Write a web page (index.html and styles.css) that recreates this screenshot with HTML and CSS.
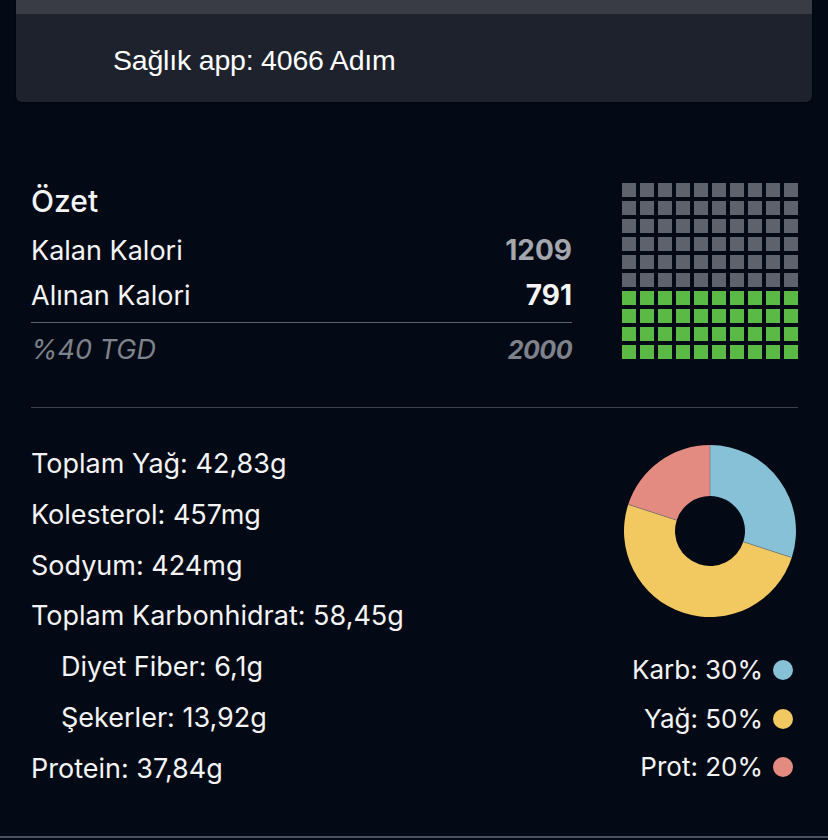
FILE: index.html
```html
<!doctype html>
<html>
<head>
<meta charset="utf-8">
<title>Özet</title>
<link rel="stylesheet" href="styles.css">
</head>
<body>
	<div class="card">
		<div class="card-top"></div>
		<div class="card-body">Sağlık app: 4066 Adım</div>
	</div>

	<div class="summary">
		<div class="summary-left">
			<h2 class="title">Özet</h2>
			<div class="row">
				<span>Kalan Kalori</span>
				<b class="gray">1209</b>
			</div>
			<div class="row row-line">
				<span>Alınan Kalori</span>
				<b>791</b>
			</div>
			<div class="row row-goal">
				<span>%40 TGD</span>
				<b>2000</b>
			</div>
		</div>
		<div class="waffle" id="waffle"></div>
	</div>

	<div class="divider"></div>

	<div class="nutrients">
		<ul class="list">
			<li>Toplam Yağ: 42,83g</li>
			<li>Kolesterol: 457mg</li>
			<li>Sodyum: 424mg</li>
			<li>Toplam Karbonhidrat: 58,45g</li>
			<li class="sub">Diyet Fiber: 6,1g</li>
			<li class="sub">Şekerler: 13,92g</li>
			<li>Protein: 37,84g</li>
		</ul>
		<div class="chart">
			<svg class="donut" width="174" height="174" viewBox="0 0 174 174">
				<path fill="#87c1d7" d="M87 1 A86 86 0 0 1 168.79 113.58 L120.29 97.82 A35 35 0 0 0 87 52 Z"/>
				<path fill="#f2c961" d="M168.79 113.58 A86 86 0 0 1 5.21 60.42 L53.71 76.18 A35 35 0 0 0 120.29 97.82 Z"/>
				<path fill="#e48b81" d="M5.21 60.42 A86 86 0 0 1 87 1 L87 52 A35 35 0 0 0 53.71 76.18 Z"/>
				<g stroke="#6b6f78" stroke-width="0.6">
					<line x1="87" y1="1" x2="87" y2="52"/>
					<line x1="168.79" y1="113.58" x2="120.29" y2="97.82"/>
					<line x1="5.21" y1="60.42" x2="53.71" y2="76.18"/>
				</g>
			</svg>
			<ul class="legend">
				<li>Karb: 30%<i class="dot blue"></i></li>
				<li>Yağ: 50%<i class="dot yellow"></i></li>
				<li>Prot: 20%<i class="dot pink"></i></li>
			</ul>
		</div>
	</div>

	<div class="bottom"></div>

	<script>
		var oWaffle = document.getElementById('waffle');
		var html = '';
		for(var i=0; i<100; i++){
			html += '<i class="'+(i>=60 ? 'on' : '')+'"></i>';
		}
		oWaffle.innerHTML = html;
	</script>
</body>
</html>
```

FILE: styles.css
```css
*{
	margin: 0;
	padding: 0;
	list-style: none;
	box-sizing: border-box;
}
body{
	width: 828px;
	height: 840px;
	overflow: hidden;
	background: #030a15;
	color: #f4f4f6;
	font-family: Inter, "Liberation Sans", sans-serif;
}
.card{
	margin: 0 16px;
	background: #1e222d;
	border-radius: 0 0 6px 6px;
	height: 102px;
	box-shadow: 0 1px 2px rgba(0,0,0,.6);
}
.card-top{
	height: 14px;
	background: #393c45;
}
.card-body{
	padding: 31px 0 0 97px;
	font-family: "Liberation Sans", Arial, sans-serif;
	font-size: 28.5px;
	line-height: 30px;
	color: #fff;
	letter-spacing: -0.2px;
}
.summary{
	display: flex;
	justify-content: space-between;
	align-items: flex-start;
	margin-top: 81px;
	padding: 0 30px 0 31px;
}
.summary-left{
	width: 541px;
}
.title{
	margin-top: 3px;
	font-size: 30px;
	font-weight: 500;
	line-height: 30px;
}
.row{
	display: flex;
	justify-content: space-between;
	font-size: 27px;
	line-height: 45px;
}
.title + .row{
	margin-top: 12px;
}
.row b{
	font-size: 28px;
	font-weight: 700;
}
.row .gray{
	color: #a5a7ae;
}
.row-line{
	padding-bottom: 4px;
	border-bottom: 1px solid #5d636e;
}
.row-goal{
	padding-top: 5px;
	line-height: 44px;
	font-style: italic;
	color: #7e828b;
}
.row-goal b{
	font-size: 25px;
	letter-spacing: -0.5px;
}
.waffle{
	display: grid;
	grid-template-columns: repeat(10, 14px);
	grid-auto-rows: 14px;
	gap: 4px;
}
.waffle i{
	background: #5e626d;
}
.waffle .on{
	background: #5bb946;
}
.divider{
	height: 1px;
	margin: 35px 30px 0 31px;
	background: #3b404b;
}
.nutrients{
	display: flex;
	justify-content: space-between;
	padding: 0 31px;
	margin-top: 31px;
}
.list li{
	font-size: 27px;
	line-height: 50.8px;
}
.list .sub{
	padding-left: 30px;
}
.chart{
	display: flex;
	flex-direction: column;
	align-items: flex-end;
}
.donut{
	display: block;
	margin-top: 5px;
}
.legend{
	margin-top: 28px;
	margin-right: 4px;
}
.legend li{
	display: flex;
	align-items: center;
	justify-content: flex-end;
	font-size: 26px;
	line-height: 48.5px;
}
.dot{
	width: 20px;
	height: 20px;
	border-radius: 50%;
	margin-left: 10px;
}
.blue{
	background: #87c1d7;
}
.yellow{
	background: #f2c961;
}
.pink{
	background: #e48b81;
}
.bottom{
	position: absolute;
	left: 0;
	right: 0;
	top: 836px;
	height: 2px;
	background: #4b5261;
}
```
